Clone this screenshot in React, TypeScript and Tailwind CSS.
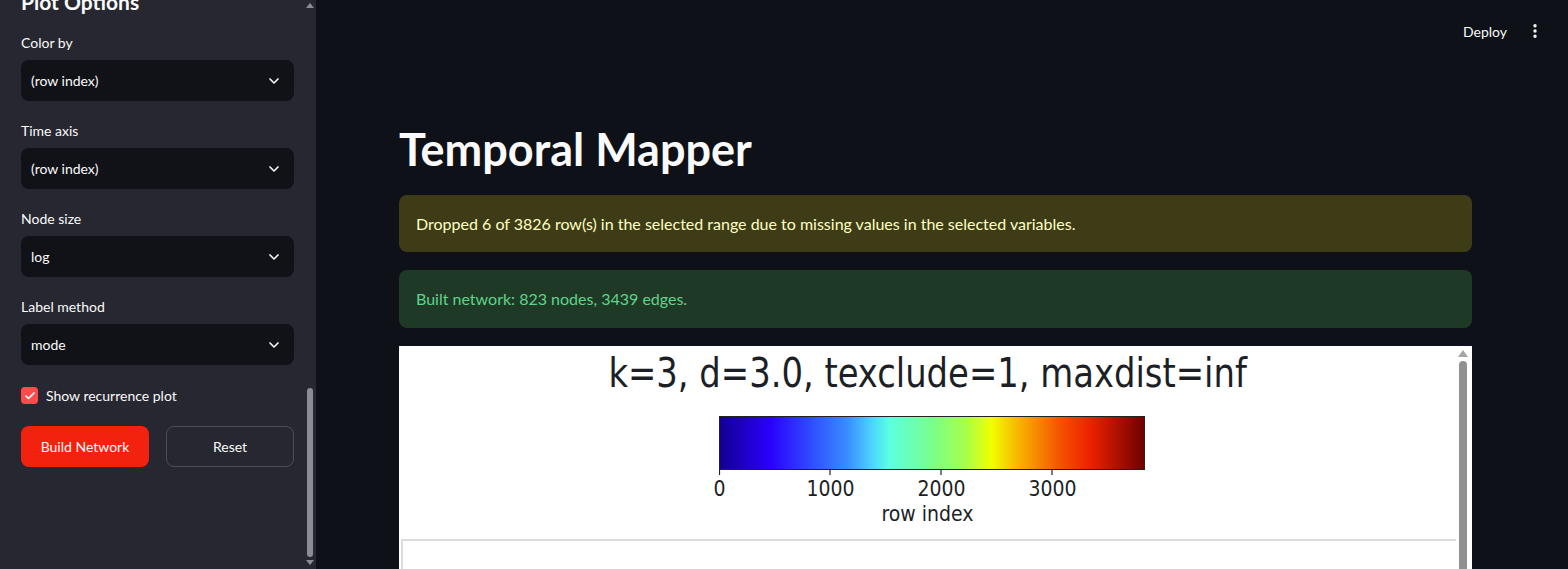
import React from 'react'
import { Check, ChevronDown, EllipsisVertical } from 'lucide-react'

const selects = [
  { label: 'Color by', value: '(row index)' },
  { label: 'Time axis', value: '(row index)' },
  { label: 'Node size', value: 'log' },
  { label: 'Label method', value: 'mode' },
]

const jet = [
  ['0', '#12008f'],
  ['0.12', '#2a00ff'],
  ['0.22', '#3050ff'],
  ['0.3', '#3a8cff'],
  ['0.36', '#4cd6ff'],
  ['0.4', '#5cffe0'],
  ['0.5', '#7aff8c'],
  ['0.58', '#a8ff48'],
  ['0.64', '#f2ff00'],
  ['0.7', '#f7b800'],
  ['0.8', '#f45400'],
  ['0.87', '#ee2200'],
  ['1', '#6e0000'],
]

function ColorBar() {
  return (
    <svg width="440" height="66" viewBox="0 0 440 66">
      <defs>
        <linearGradient id="jet" x1="0" x2="1" y1="0" y2="0">
          {jet.map(([o, c]) => (
            <stop key={o} offset={o} stopColor={c} />
          ))}
        </linearGradient>
      </defs>
      <rect x="0.5" y="0.5" width="425" height="53" fill="url(#jet)" stroke="#222" strokeWidth="1" />
      {[0.5, 111, 222, 333].map((x) => (
        <line key={x} x1={x} x2={x} y1="54" y2="59" stroke="#222" strokeWidth="1.2" />
      ))}
    </svg>
  )
}

export default function App() {
  return (
    <div className="flex h-[569px] w-[1568px] overflow-hidden bg-[#0e1117] text-[#fafafa]" style={{ fontFamily: 'Lato, "Noto Sans", sans-serif' }}>
      {/* sidebar */}
      <div className="relative h-full w-[316px] shrink-0 overflow-hidden bg-[#262730]">
        <div className="flex flex-col pl-[21px] pr-[22px]">
          <div className="-mt-[12px] h-[44px] shrink-0 text-[21px] font-bold leading-[28px]">Plot Options</div>
          {selects.map((s) => (
            <div key={s.label} className="mb-[19px] flex shrink-0 flex-col">
              <div className="mb-[7px] h-[21px] text-[14px] leading-[21px]">{s.label}</div>
              <div className="flex h-[41px] items-center justify-between rounded-[8px] bg-[#111218] pl-[10px] pr-[12px] text-[14px]">
                <span>{s.value}</span>
                <ChevronDown size={16} strokeWidth={2.5} />
              </div>
            </div>
          ))}
          <div className="mt-[3px] flex h-[17px] shrink-0 items-center gap-[8px] text-[14px]">
            <div className="flex h-[17px] w-[17px] items-center justify-center rounded-[4px] bg-[#ff4b4b]">
              <Check size={12} strokeWidth={3.5} />
            </div>
            <span>Show recurrence plot</span>
          </div>
          <div className="mt-[22px] flex shrink-0 gap-[17px] text-[14px]">
            <div className="flex h-[41px] w-[128px] items-center justify-center rounded-[8px] bg-[#f3220f]">Build Network</div>
            <div className="flex h-[41px] w-[128px] items-center justify-center rounded-[8px] border border-[#4c4d57]">Reset</div>
          </div>
        </div>
        {/* scrollbar */}
        <div className="absolute right-[3px] top-0 flex h-full w-[7px] flex-col items-center">
          <div className="mt-[3px] h-0 w-0 border-x-[4px] border-b-[5px] border-x-transparent border-b-[#8c8d93]" />
          <div className="mt-[380px] h-[169px] w-[6px] rounded-full bg-[#8c8d93]" />
          <div className="mt-[3px] h-0 w-0 border-x-[4px] border-t-[5px] border-x-transparent border-t-[#8c8d93]" />
        </div>
      </div>

      {/* main */}
      <div className="flex h-full flex-1 flex-col overflow-hidden">
        <div className="flex h-[62px] shrink-0 items-center justify-end gap-[19px] pr-[24px] text-[14px]">
          <span>Deploy</span>
          <EllipsisVertical size={18} strokeWidth={2.5} />
        </div>
        <div className="flex shrink-0 flex-col pl-[83px] pr-[96px]">
          <h1 className="mt-[61px] h-[52px] text-[45px] font-bold leading-[52px]">Temporal Mapper</h1>
          <div className="mt-[20px] flex h-[57px] items-center rounded-[8px] bg-[#3d3c17] px-[17px] text-[16px] text-[#ffffc2]">
            Dropped 6 of 3826 row(s) in the selected range due to missing values in the selected variables.
          </div>
          <div className="mt-[18px] flex h-[58px] items-center rounded-[8px] bg-[#1e3a27] px-[17px] text-[16px] text-[#5fd48a]">
            Built network: 823 nodes, 3439 edges.
          </div>
          <div className="mt-[18px] flex h-[260px] bg-white">
            <div className="flex flex-1 flex-col">
              <div className="flex flex-col items-center text-[#1c1f26]" style={{ fontFamily: '"DejaVu Sans Condensed", "DejaVu Sans", sans-serif' }}>
                <div className="mt-[2px] h-[50px] scale-x-[0.94] text-[40px] leading-[50px]">k=3, d=3.0, texclude=1, maxdist=inf</div>
                <div className="ml-[23px] mt-[18px] flex w-[440px] flex-col">
                  <ColorBar />
                  <div className="-ml-[55px] -mt-[4px] flex text-[21px] leading-[22px]">
                    <span className="w-[111px] text-center">0</span>
                    <span className="w-[111px] text-center">1000</span>
                    <span className="w-[111px] text-center">2000</span>
                    <span className="w-[111px] text-center">3000</span>
                  </div>
                </div>
                <div className="mt-[3px] text-[21px] leading-[22px]">row index</div>
              </div>
              <div className="ml-[2px] mt-[14px] h-[60px] border-l-2 border-t-2 border-[#dcdcdc]" />
            </div>
            <div className="flex w-[16px] flex-col items-center pr-[3px]">
              <div className="mt-[4px] h-0 w-0 border-x-[5px] border-b-[7px] border-x-transparent border-b-[#a3a3a3]" />
              <div className="mt-[4px] w-[8px] flex-1 rounded-t-full bg-[#909090]" />
            </div>
          </div>
        </div>
      </div>
    </div>
  )
}
